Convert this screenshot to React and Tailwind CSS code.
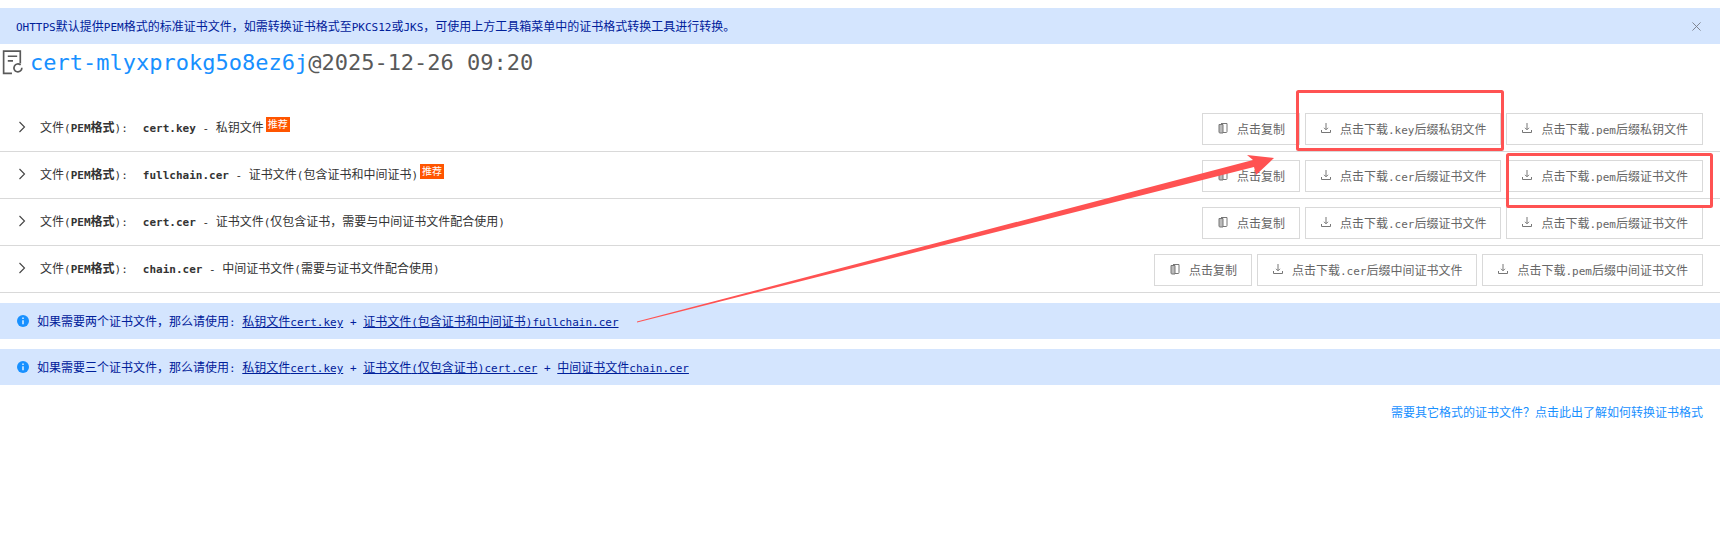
const latin = "text-[11px] font-['DejaVu_Sans_Mono',monospace]";

// latin runs sit in a slightly smaller mono so they keep the 6.6px advance
function T({ children, className = '' }) {
  const parts = children.split(/([\x00-\x7F]+)/).filter(Boolean);
  return (
    <span className={`whitespace-pre ${className}`}>
      {parts.map((p, i) =>
        /^[\x00-\x7F]/.test(p) ? (
          <span key={i} className={latin}>{p}</span>
        ) : (
          <span key={i} className="text-xs font-['Noto_Sans_CJK_SC',sans-serif]">{p}</span>
        )
      )}
    </span>
  );
}

function CopyIcon() {
  return (
    <svg viewBox="0 0 12 12" className="w-3 h-3 shrink-0" fill="none" stroke="#777" strokeWidth="1">
      <path d="M4 1.5h6v8.2q0 .8-.8.8H6" />
      <path d="M2 2.5h4v8.5H3q-1 0-1-1z" fill="#bbb" />
    </svg>
  );
}

function DownloadIcon() {
  return (
    <svg viewBox="0 0 12 12" className="w-3 h-3 shrink-0" fill="none" stroke="#777" strokeWidth="1">
      <path d="M6 1v6.5M4 5.8l2 2 2-2M1.5 8v2.5h9V8" />
    </svg>
  );
}

function Btn({ icon, children }) {
  return (
    <button className="h-8 flex items-center gap-2 px-[14px] pb-[3px] border border-[#d9d9d9] bg-white text-[#666] shrink-0">
      {icon === 'copy' ? <CopyIcon /> : <DownloadIcon />}
      <T>{children}</T>
    </button>
  );
}

function Badge() {
  return (
    <span className="inline-flex items-center justify-center w-6 h-[15px] bg-[#ff5500] text-white text-[10px] leading-none font-['Noto_Sans_CJK_SC',sans-serif] ml-[2px] relative -top-[2px]">
      推荐
    </span>
  );
}

function FileRow({ name, desc, badge, cerLabel, pemLabel }) {
  return (
    <div className="h-[47px] border-b border-[#d9d9d9] flex justify-between pl-[18px] pr-[17px] pt-2">
      <div className="flex items-center h-[26px] text-[#333]">
        <svg viewBox="0 0 8 12" className="w-2 h-3 mr-[14px] mt-[2px]" fill="none" stroke="#444" strokeWidth="1.1">
          <path d="M1.5 1l5 5-5 5" />
        </svg>
        <T>文件(</T>
        <T className="font-bold">PEM格式</T>
        <T>):</T>
        <T className="font-bold ml-[15px]">{name}</T>
        <T>{` - ${desc}`}</T>
        {badge && <Badge />}
      </div>
      <div className="flex gap-[5px] h-8">
        <Btn icon="copy">点击复制</Btn>
        <Btn icon="down">{cerLabel}</Btn>
        <Btn icon="down">{pemLabel}</Btn>
      </div>
    </div>
  );
}

function InfoAlert({ lead, links }) {
  return (
    <div className="h-9 bg-[#d4e5fe] flex items-center pl-[17px] text-[#00209a]">
      <svg viewBox="0 0 12 12" className="w-3 h-3 mr-2">
        <circle cx="6" cy="6" r="6" fill="#1890ff" />
        <path d="M6 2.5v1.4M6 5.2v4" stroke="#fff" strokeWidth="1.3" />
      </svg>
      <div className="pb-[2px]">
        <T>{lead}</T>
        {links.map((l, i) => (
          <span key={i} className="whitespace-pre">
            {i > 0 && <T>{' + '}</T>}
            <T className="underline">{l}</T>
          </span>
        ))}
      </div>
    </div>
  );
}

export default function App() {
  return (
    <div className="relative w-[1730px] h-[549px] bg-white overflow-hidden">
      <div className="w-[1720px] pt-2">
        <div className="h-9 bg-[#d4e5fe] flex items-center justify-between pl-4 pr-[19px] text-[#00209a]">
          <div className="pb-[2px]">
            <T>OHTTPS默认提供PEM格式的标准证书文件，如需转换证书格式至PKCS12或JKS，可使用上方工具箱菜单中的证书格式转换工具进行转换。</T>
          </div>
          <svg viewBox="0 0 10 10" className="w-[9px] h-[9px]" fill="none" stroke="#777c88" strokeWidth="1">
            <path d="M.5.5l9 9M9.5.5l-9 9" />
          </svg>
        </div>

        <div className="h-[61px] pt-[6px] pl-[2px] flex items-start">
          <svg viewBox="0 0 20 24" className="w-[22px] h-[25px] mr-[6px]" fill="none" stroke="#595959" strokeWidth="1.6">
            <path d="M9 22.5H1V1h16v12" />
            <path d="M5 6h9M5 10.5h5" />
            <path d="M18.5 17a3.8 3.8 0 1 1-1.2-2.6" />
          </svg>
          <h1 className="-mt-px text-[22px] leading-[28px] font-['DejaVu_Sans_Mono',monospace] whitespace-pre text-[#595959]">
            <span className="text-[#1890ff]">cert-mlyxprokg5o8ez6j</span>@2025-12-26 09:20
          </h1>
        </div>

        <FileRow name="cert.key" desc="私钥文件" badge cerLabel="点击下载.key后缀私钥文件" pemLabel="点击下载.pem后缀私钥文件" />
        <FileRow name="fullchain.cer" desc="证书文件(包含证书和中间证书)" badge cerLabel="点击下载.cer后缀证书文件" pemLabel="点击下载.pem后缀证书文件" />
        <FileRow name="cert.cer" desc="证书文件(仅包含证书，需要与中间证书文件配合使用)" cerLabel="点击下载.cer后缀证书文件" pemLabel="点击下载.pem后缀证书文件" />
        <FileRow name="chain.cer" desc="中间证书文件(需要与证书文件配合使用)" cerLabel="点击下载.cer后缀中间证书文件" pemLabel="点击下载.pem后缀中间证书文件" />

        <div className="mt-[10px] flex flex-col gap-[10px]">
          <InfoAlert lead="如果需要两个证书文件，那么请使用: " links={['私钥文件cert.key', '证书文件(包含证书和中间证书)fullchain.cer']} />
          <InfoAlert lead="如果需要三个证书文件，那么请使用: " links={['私钥文件cert.key', '证书文件(仅包含证书)cert.cer', '中间证书文件chain.cer']} />
        </div>

        <div className="mt-[17px] pr-[17px] text-right text-xs leading-5 text-[#1890ff] font-['Noto_Sans_CJK_SC',sans-serif]">
          需要其它格式的证书文件？点击此出了解如何转换证书格式
        </div>
      </div>

      {/* red annotations drawn over the page */}
      <svg className="absolute inset-0 pointer-events-none" width="1730" height="549" fill="none">
        <rect x="1297.5" y="91.5" width="205" height="58" rx="1" stroke="#ff5252" strokeWidth="3" />
        <rect x="1507.5" y="154.5" width="204" height="52" rx="1" stroke="#ff5252" strokeWidth="3" />
        <polygon points="637,321.5 1253,160 1247,155 1274,158 1256,175 1254,167 637,322.5" fill="#ff5252" />
      </svg>
    </div>
  );
}
